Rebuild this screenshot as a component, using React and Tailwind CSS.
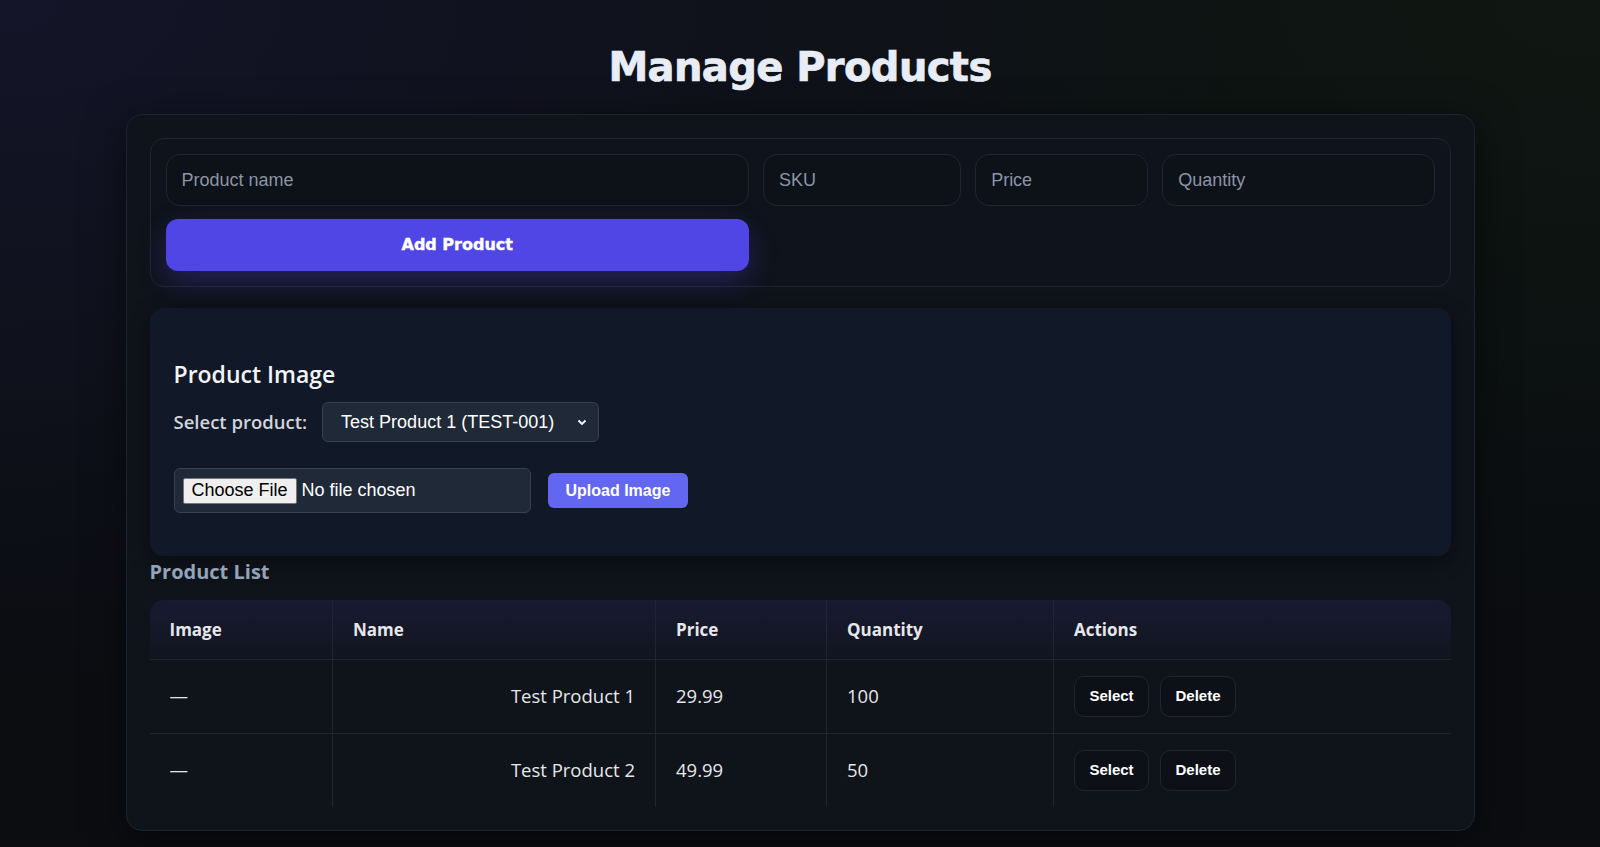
import React from 'react';

const products = [
  { name: 'Test Product 1', price: '29.99', qty: '100' },
  { name: 'Test Product 2', price: '49.99', qty: '50' },
];

const ui = { fontFamily: '"Open Sans", "Noto Sans", sans-serif' };
const arial = { fontFamily: '"Liberation Sans", Arial, sans-serif' };
const heavy = { fontFamily: '"DejaVu Sans", Verdana, sans-serif' };

function Field({ placeholder }) {
  return (
    <input
      placeholder={placeholder}
      style={arial}
      className="h-[52px] w-full rounded-[14px] border border-[#1f2633] bg-[#0d1118] px-[15px] text-[18px] text-gray-200 placeholder:text-[#8b95a5] outline-none"
    />
  );
}

export default function App() {
  return (
    <div
      style={ui}
      className="min-h-screen bg-[#0b0d11] bg-[radial-gradient(ellipse_at_0%_0%,#141528_0%,transparent_55%),radial-gradient(ellipse_at_100%_0%,#0f1712_0%,transparent_50%)] pb-10"
    >
      <h1
        style={heavy}
        className="pt-[39px] pb-[19px] text-center text-[40px] font-bold leading-[56px] tracking-[-0.6px] text-[#e8edf5] [-webkit-text-stroke:0.7px_#e8edf5]"
      >
        Manage Products
      </h1>

      <div className="mx-auto w-[1349px] rounded-[16px] border border-[#1c2331] bg-[#0f131a] p-[23px] shadow-[0_10px_40px_rgba(0,0,0,0.5)]">
        {/* add product form */}
        <div className="rounded-[14px] border border-[#1e2533] bg-[#0f131b] p-[15px]">
          <div className="grid grid-cols-[583fr_198fr_173fr_272fr] gap-x-[14px] gap-y-[13px]">
            <Field placeholder="Product name" />
            <Field placeholder="SKU" />
            <Field placeholder="Price" />
            <Field placeholder="Quantity" />
            <button
              style={heavy}
              className="h-[52px] rounded-[12px] bg-[#4f46e5] text-[16px] font-bold text-white [-webkit-text-stroke:0.4px_#ffffff] shadow-[0_10px_28px_rgba(79,70,229,0.3)]"
            >
              Add Product
            </button>
          </div>
        </div>

        {/* image upload */}
        <div className="mt-[21px] rounded-[14px] bg-[#111827] px-[24px] pt-[50px] pb-[43px] shadow-[0_6px_20px_rgba(0,0,0,0.35)]">
          <h3 className="text-[23px] font-semibold leading-[32px] text-[#f3f4f6]">Product Image</h3>
          <div className="mt-[12px] flex items-center gap-[15px]">
            <span className="text-[18.5px] font-semibold text-[#d1d5db]">Select product:</span>
            <div
              style={arial}
              className="flex h-[40px] w-[277px] items-center justify-between rounded-[6px] border border-[#374151] bg-[#1f2937] pl-[18px] pr-[10px] text-[18px] text-white"
            >
              <span>Test Product 1 (TEST-001)</span>
              <svg width="12" height="12" viewBox="0 0 12 12" fill="none" stroke="currentColor" strokeWidth="1.8">
                <path d="M2.5 4.5 6 8l3.5-3.5" />
              </svg>
            </div>
          </div>
          <div className="mt-[26px] flex items-center gap-[17px]">
            <div
              style={arial}
              className="flex h-[45px] w-[357px] items-center rounded-[6px] border border-[#374151] bg-[#1f2937] px-[8px] text-[18px] text-white"
            >
              <span className="flex h-[26px] items-center rounded-[2px] border border-[#767676] bg-[#efefef] px-[8px] text-black">
                Choose File
              </span>
              <span className="ml-[5px]">No file chosen</span>
            </div>
            <button
              style={arial}
              className="h-[35px] rounded-[6px] bg-[#6366f1] px-[18px] text-[16px] font-bold text-white"
            >
              Upload Image
            </button>
          </div>
        </div>

        <h2 className="mt-[2px] mb-[14px] text-[20px] font-bold leading-[28px] text-[#94a3b8]">Product List</h2>

        <div className="overflow-hidden rounded-t-[14px]">
          <table className="w-full table-fixed border-collapse text-[18.5px] text-[#e5e7eb]">
            <colgroup>
              <col className="w-[183px]" />
              <col className="w-[323px]" />
              <col className="w-[171px]" />
              <col className="w-[227px]" />
              <col />
            </colgroup>
            <thead className="bg-[linear-gradient(to_bottom,#191a33,#11151d)]">
              <tr className="h-[59px] text-left text-[17px] font-bold">
                <th className="border-r border-[#1f2633] px-[20px]">Image</th>
                <th className="border-r border-[#1f2633] px-[20px]">Name</th>
                <th className="border-r border-[#1f2633] px-[20px]">Price</th>
                <th className="border-r border-[#1f2633] px-[20px]">Quantity</th>
                <th className="px-[20px]">Actions</th>
              </tr>
            </thead>
            <tbody className="bg-[#0f131a]">
              {products.map((p) => (
                <tr key={p.name} className="h-[74px] border-t border-[#1f2633]">
                  <td className="border-r border-[#1f2633] px-[20px]">—</td>
                  <td className="border-r border-[#1f2633] px-[20px] text-right">{p.name}</td>
                  <td className="border-r border-[#1f2633] px-[20px]">{p.price}</td>
                  <td className="border-r border-[#1f2633] px-[20px]">{p.qty}</td>
                  <td className="px-[20px]">
                    <div className="flex gap-[11px]" style={arial}>
                      <button className="h-[41px] w-[75px] rounded-[10px] border border-[#1f2633] bg-[#0d1117] text-[15px] font-bold text-white">
                        Select
                      </button>
                      <button className="h-[41px] w-[76px] rounded-[10px] border border-[#1f2633] bg-[#0d1117] text-[15px] font-bold text-white">
                        Delete
                      </button>
                    </div>
                  </td>
                </tr>
              ))}
            </tbody>
          </table>
        </div>
      </div>
    </div>
  );
}
